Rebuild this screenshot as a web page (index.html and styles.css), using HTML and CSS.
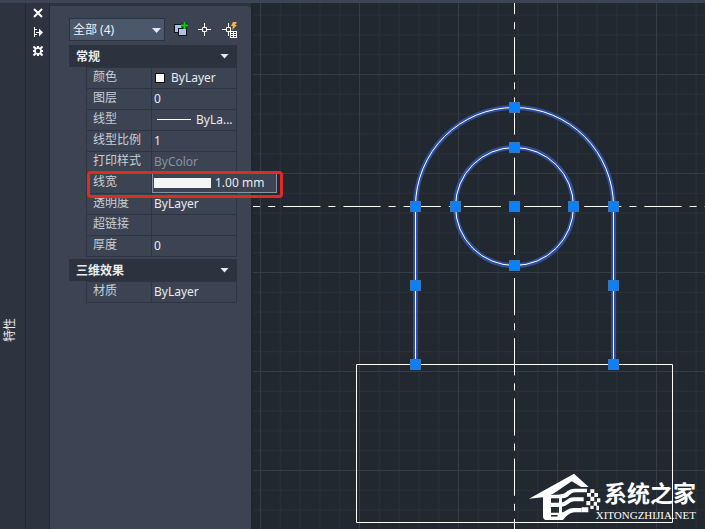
FILE: index.html
```html
<!DOCTYPE html>
<html lang="zh-CN">
<head>
    <meta charset="UTF-8">
    <title>特性</title>
    <link rel="stylesheet" href="styles.css">
</head>
<body>

<div class="app">
    <aside class="palette">
        <div class="palette-title"><h1>特性</h1></div>

        <div class="palette-tools">
            <button type="button" aria-label="关闭">
                <svg width="12" height="12" viewBox="0 0 12 12"><path d="M2 2l8 8M10 2l-8 8" stroke="#fff" stroke-width="2" fill="none"/></svg>
            </button>
            <button type="button" aria-label="自动隐藏">
                <svg width="12" height="12" viewBox="0 0 12 12"><path d="M2.500 1v10M3 3.500h2M3 8.500h2M4 6.500h5" stroke="#fff" fill="none"/><path d="M7 2.500l4 4-4 4z" fill="#fff"/></svg>
            </button>
            <button type="button" aria-label="设置">
                <svg width="12" height="12" viewBox="0 0 12 12"><circle cx="6" cy="6" r="3" stroke="#fff" stroke-width="1.500" fill="none"/><path d="M6 1v2M6 9v2M1 6h2M9 6h2M1.500 1.500l2 2M8.500 8.500l2 2M10.500 1.500l-2 2M3.500 8.500l-2 2" stroke="#fff" stroke-width="2"/></svg>
            </button>
        </div>

        <div class="palette-body">
            <div class="toolbar">
                <div class="picker">
                    <select aria-label="选择对象">
                        <option>全部 (4)</option>
                    </select>
                </div>
                <button type="button" aria-label="切换 PICKADD">
                    <svg width="16" height="16" viewBox="0 0 16 16">
                        <rect x="1.500" y="2.500" width="8" height="8" fill="#a9c3e6" stroke="#10151d"/>
                        <rect x="5.500" y="6.500" width="8" height="7" fill="#a9c3e6" stroke="#10151d"/>
                        <path d="M11.500 0v7M8 3.500h7" stroke="#123312" stroke-width="4"/>
                        <path d="M11.500 0v7M8 3.500h7" stroke="#12c51c" stroke-width="2"/>
                    </svg>
                </button>
                <button type="button" aria-label="选择对象">
                    <svg width="16" height="16" viewBox="0 0 16 16"><path d="M7.500 1v4M7.500 10v4M1 7.500h4M10 7.500h4M5.500 5.500h4v4h-4z" fill="none" stroke="#fff"/></svg>
                </button>
                <button type="button" aria-label="快速选择">
                    <svg width="16" height="16" viewBox="0 0 16 16">
                        <path d="M7.500 1v4M7.500 10v4M1 7.500h4M5.500 5.500h4v4h-4z" fill="none" stroke="#fff"/>
                        <path d="M12 0h4l-2 3h2l-5 5 1-4h-2z" fill="#f6b546"/>
                        <path d="M9 9h7v7H9z" fill="#fff"/>
                        <path d="M10 10.500h2M13 10.500h2M10 12.500h2M13 12.500h2M10 14.500h2M13 14.500h2" stroke="#333"/>
                    </svg>
                </button>
            </div>

            <section class="group">
                <h2>常规 <button type="button" class="fold" aria-label="折叠常规"></button></h2>
                <table>
                    <tr><th scope="row">颜色</th><td><span class="swatch"></span>ByLayer</td></tr>
                    <tr><th scope="row">图层</th><td>0</td></tr>
                    <tr><th scope="row">线型</th><td><span class="linetype"></span>ByLa...</td></tr>
                    <tr><th scope="row">线型比例</th><td>1</td></tr>
                    <tr><th scope="row">打印样式</th><td class="disabled">ByColor</td></tr>
                    <tr class="marked"><th scope="row">线宽</th><td><div class="editing"><span class="weight"></span>1.00 mm</div></td></tr>
                    <tr><th scope="row">透明度</th><td>ByLayer</td></tr>
                    <tr><th scope="row">超链接</th><td></td></tr>
                    <tr><th scope="row">厚度</th><td>0</td></tr>
                </table>
            </section>

            <section class="group">
                <h2>三维效果 <button type="button" class="fold" aria-label="折叠三维效果"></button></h2>
                <table>
                    <tr><th scope="row">材质</th><td>ByLayer</td></tr>
                </table>
            </section>
        </div>
    </aside>

    <main class="drawing">
        <svg class="sheet" viewBox="253 3 452 526" preserveAspectRatio="xMinYMin slice">
            <defs>
                <pattern id="minor" x="260" y="74" width="19.800" height="19.800" patternUnits="userSpaceOnUse">
                    <path d="M0 .5h20M.5 0v20" stroke="#28313a"/>
                </pattern>
                <pattern id="major" x="260" y="74" width="99" height="99" patternUnits="userSpaceOnUse">
                    <path d="M0 .5h99M.5 0v99" stroke="#353e48"/>
                </pattern>
            </defs>
            <rect x="253" y="3" width="452" height="526" fill="url(#minor)"/>
            <rect x="253" y="3" width="452" height="526" fill="url(#major)"/>

            <!-- centre lines -->
            <g stroke="#fff" stroke-dasharray="37.200 8 7 8">
                <path d="M514.500 -23V529"/>
                <path d="M223 206.500H705"/>
            </g>
            <path d="M356.500 364.500h316v158h-316z" fill="none" stroke="#fff"/>

            <!-- selected objects -->
            <g fill="none" stroke="#2f4f9c" stroke-width="5">
                <path d="M415.500 364V206.500a99 99 0 0 1 198 0V364"/>
                <circle cx="514.500" cy="206.500" r="59"/>
            </g>
            <g fill="none" stroke="#fff">
                <path d="M415.500 364V206.500a99 99 0 0 1 198 0V364"/>
                <circle cx="514.500" cy="206.500" r="59"/>
            </g>

            <!-- grips -->
            <g fill="#0a80fa" stroke="#3b75b5">
                <rect x="509.500" y="102.500" width="10" height="10"/>
                <rect x="509.500" y="142.500" width="10" height="10"/>
                <rect x="410.500" y="201.500" width="10" height="10"/>
                <rect x="450.500" y="201.500" width="10" height="10"/>
                <rect x="509.500" y="201.500" width="10" height="10"/>
                <rect x="568.500" y="201.500" width="10" height="10"/>
                <rect x="608.500" y="201.500" width="10" height="10"/>
                <rect x="509.500" y="260.500" width="10" height="10"/>
                <rect x="410.500" y="280.500" width="10" height="10"/>
                <rect x="608.500" y="280.500" width="10" height="10"/>
                <rect x="410.500" y="359.500" width="10" height="10"/>
                <rect x="608.500" y="359.500" width="10" height="10"/>
            </g>
        </svg>

        <div class="brand">
            <svg class="brand-mark" width="72" height="48" viewBox="12 15 216 144">
                <g fill="#fff">
                    <path d="M12 92L147 17l44 40h-22l-29-17-53 36-9 4v66h24v10H62q-8-2-8-12V88z"/>
                    <path d="M78 80q30 2 43-6 12-12 28-12h37v11h-34q-12 0-24 13-8 5-18 5H78z"/>
                    <path d="M78 104h26q12 0 22-9 8-7 20-7h30v12h-28q-10 0-20 9-9 8-22 8H78z"/>
                    <path d="M78 134h26q12 0 22-8 8-6 20-6h24v13h-22q-10 0-20 8-9 7-14 15H78v-10h20v-5H78z"/>
                    <path d="M102 84h9v68h-9z"/>
                    <path d="M196 64h12v11h-12zM186 75h12v11h-12zM208 75h11v12h-11zM196 86h12v13h-12zM184 99h12v13h-12zM216 91h10v12h-10zM206 101h10v12h-10zM170 118h20v15h-20zM196 113h10v10h-10zM214 113h8v14h-8z"/>
                </g>
            </svg>
            <div class="brand-text">
                <strong>系统之家</strong>
                <span>XITONGZHIJIA.NET</span>
            </div>
        </div>
    </main>
</div>

</body>
</html>
```

FILE: styles.css
```css
*, *::after { box-sizing: border-box; }
body { margin: 0; background: #222830; color: #e8ebef; font-family: "Noto Sans", "Noto Sans CJK SC", sans-serif; font-size: 12px; }
button { padding: 0; border: 0; background: none; color: inherit; }
svg { display: block; }

.app { display: flex; min-height: 100vh; border-top: 3px solid #3b4553; }

/* properties palette */
.palette { display: flex; flex: none; background: #2d333f; border-right: 2px solid #20252e; }
.palette-title { display: flex; align-items: flex-end; width: 26px; padding: 0 0 187px 2px; border-right: 1px solid #222833; }
.palette-title h1 { margin: 0; font-size: 12px; line-height: 16px; font-weight: normal; writing-mode: vertical-rl; text-orientation: sideways; transform: rotate(180deg); }
.palette-tools { display: flex; flex-direction: column; gap: 7px; width: 24px; padding: 4px 6px; border-right: 1px solid #222833; }
.palette-tools button { height: 12px; }
.palette-body { width: 201px; padding: 12px 14px 0 19px; background: #3c4453; border-top: 3px solid #2d333f; border-radius: 0 6px 0 0; }

.toolbar { display: flex; align-items: center; gap: 8px; height: 23px; margin-bottom: 4px; }
.toolbar button { flex: none; width: 16px; height: 16px; }
.picker { position: relative; flex: none; width: 96px; }
.picker::after { content: ""; position: absolute; top: 10px; right: 4px; width: 9px; height: 5px; background: #e3e8f4; clip-path: polygon(0 0, 100% 0, 50% 100%); pointer-events: none; }
.picker select { display: block; appearance: none; width: 100%; height: 23px; padding: 0 3px; border: 1px solid #2b3240; border-radius: 0; background: #4b576a; color: #eef1f5; font: inherit; }

.group { margin-bottom: 2px; }
.group h2 { display: flex; align-items: center; justify-content: space-between; height: 22px; margin: 0; padding: 0 8px 0 7px; background: #2d333e; font-size: 12px; }
.fold { width: 9px; height: 5px; background: #e3e8f4; clip-path: polygon(0 0, 100% 0, 50% 100%); }
.group table { width: 151px; margin-left: 17px; border-collapse: collapse; table-layout: fixed; }
.group th, .group td { height: 21px; padding: 0 0 0 2px; border: 1px solid #2d3443; line-height: 20px; text-align: left; white-space: nowrap; }
.group th { width: 65px; padding: 0 0 3px 6px; color: #c9ced6; font-weight: normal; line-height: 17px; }
.group .disabled { color: #8b919c; }

.swatch { display: inline-block; width: 10px; height: 10px; margin: 0 6px 0 1px; border: 1px solid #111; background: #fff; vertical-align: -1px; }
.linetype { display: inline-block; width: 34px; height: 1px; margin: 0 5px 0 3px; background: #fff; vertical-align: 4px; }
.weight { width: 57px; height: 10px; margin-right: 4px; background: #f4f5f6; }

/* the row being edited reaches past the table */
.marked th { position: relative; }
.marked th::after { content: ""; position: absolute; z-index: 2; top: -2px; left: 0; width: 196px; height: 27px; border: 3px solid #e32a20; border-radius: 4px; }
.group .marked td { padding: 0; }
.editing { position: relative; z-index: 1; display: flex; align-items: center; width: 125px; height: 20px; padding-left: 1px; border: 1px solid #8a93a0; background: #3c4453; }

/* drawing area */
.drawing { position: relative; flex: 1; min-width: 0; overflow: hidden; }
.sheet { width: 100%; height: 100%; }

.brand { position: absolute; right: 9px; bottom: 8px; display: flex; align-items: flex-end; color: #fff; }
.brand-text { display: flex; flex-direction: column; align-items: flex-end; margin-left: -5px; }
.brand strong { margin-bottom: 4px; font: bold 23px/26px "Noto Sans CJK SC", sans-serif; }
.brand span { font: 11px/12px "Liberation Serif", serif; }
```
